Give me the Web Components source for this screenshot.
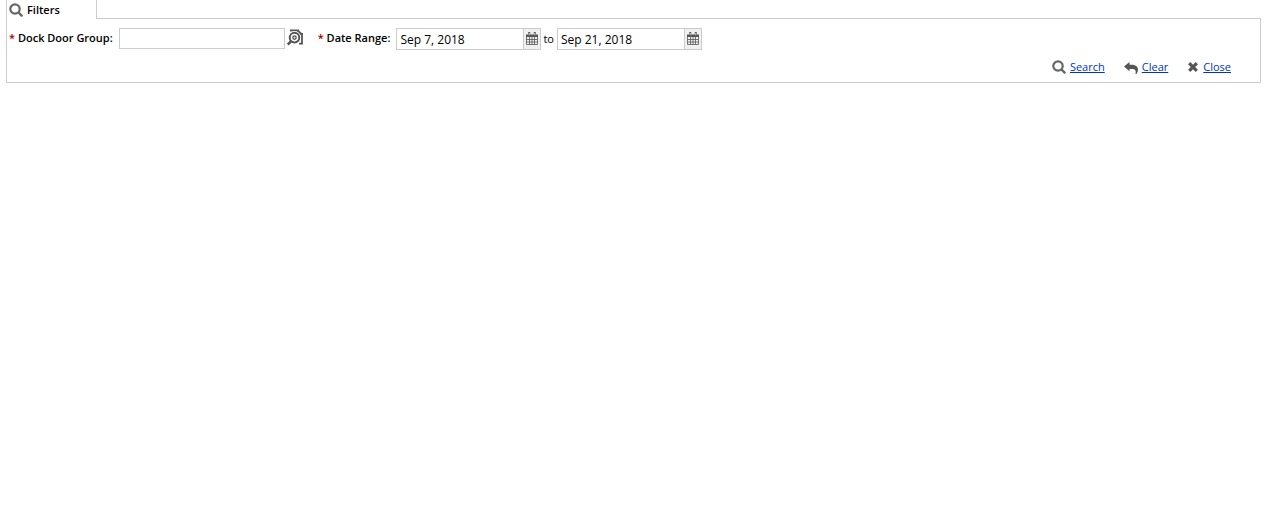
<!DOCTYPE html>
<html lang="en">
<head>
<meta charset="utf-8">
<title>Filters</title>
<style>
body { margin: 0; background: #fff; color: #000; font: 11px/16px "Open Sans", sans-serif; }
</style>
</head>
<body>
<filter-panel heading="Filters">
  <lookup-field label="Dock Door Group:"></lookup-field>
  <date-range label="Date Range:" from="Sep 7, 2018" to="Sep 21, 2018"></date-range>
  <action-link slot="actions" icon="search">Search</action-link>
  <action-link slot="actions" icon="undo">Clear</action-link>
  <action-link slot="actions" icon="close">Close</action-link>
</filter-panel>
<script>
const ICONS = {
  search: [14, 14, '<circle cx="6" cy="6" r="4.7" fill="none" stroke="#666" stroke-width="2.2"/><path d="M9.5 9.5L12.6 12.6" stroke="#666" stroke-width="2.4" stroke-linecap="round"/>'],
  lookup: [16, 17, '<path d="M3 1.5H11V5H15V14.7H12" fill="none" stroke="currentColor" stroke-width="1.8"/><path d="M11 .6L15.9 5V6H11Z" fill="currentColor"/><circle cx="7.5" cy="8.6" r="6.6" fill="#fff"/><circle cx="7.5" cy="8.6" r="4.8" fill="none" stroke="currentColor" stroke-width="2"/><circle cx="7.5" cy="8.6" r="2.3" fill="currentColor"/><path d="M6.2 8.6H8.8M7.5 7.3V9.9" stroke="#fff" stroke-width=".6"/><path d="M4 12.4L.8 15.6" stroke="currentColor" stroke-width="2.6"/>'],
  undo: [14, 14, '<path d="M0 6.5L5.5 2V4.7H8C12 4.7 14 7 14 9.8C14 11.4 13.3 13 12.4 14H11.4C12.4 11 11.4 9 8 9H5.5V11.3Z" fill="currentColor"/>'],
  close: [12, 12, '<path d="M2.2 2.2L9.8 9.8M9.8 2.2L2.2 9.8" stroke="currentColor" stroke-width="3.1"/>'],
  calendar: [12, 14, '<path d="M.5 3.5H11.5V12.5H.5ZM.5 7.5H11.5M.5 10H11.5M3.5 5V12.5M6 5V12.5M8.5 5V12.5" fill="none" stroke="currentColor" stroke-width=".8"/><path d="M0 2.5H12V5H0Z" fill="currentColor"/><path d="M3.2 1V3.2M8.8 1V3.2" stroke="currentColor" stroke-width="2.2" stroke-linecap="round"/><path d="M3.2 1V3.2M8.8 1V3.2" stroke="#fff" stroke-width=".8"/>']
};

class UiIcon extends HTMLElement {
  connectedCallback() {
    const [w, h, shape] = ICONS[this.getAttribute('name')];
    this.attachShadow({ mode: 'open' }).innerHTML = `
      <style>
        :host { display: inline-flex; flex: none; color: #555; }
        svg { display: block; }
      </style>
      <svg width="${w}" height="${h}" viewBox="0 0 ${w} ${h}" aria-hidden="true">${shape}</svg>`;
  }
}

class FilterPanel extends HTMLElement {
  connectedCallback() {
    this.attachShadow({ mode: 'open' }).innerHTML = `
      <style>
        :host { display: block; margin: 0 17px 0 6px; }
        header { display: flex; height: 19px; }
        h2 { display: flex; align-items: center; gap: 4px; box-sizing: border-box; width: 91px; margin: 0;
             padding: 1px 2px 0; border: solid #ccc; border-width: 0 1px; font: inherit; font-weight: 600; }
        .rule { flex: 1; border-bottom: 1px solid #ccc; }
        section { border: solid #ccc; border-width: 0 1px 1px; padding: 9px 2px 7px; }
        .fields { display: flex; flex-wrap: wrap; align-items: flex-start; gap: 15px; }
        .actions { display: flex; justify-content: flex-end; gap: 19px; padding: 9px 27px 0 0; }
      </style>
      <header><h2><ui-icon name="search"></ui-icon>${this.getAttribute('heading')}</h2><div class="rule"></div></header>
      <section>
        <div class="fields"><slot></slot></div>
        <div class="actions"><slot name="actions"></slot></div>
      </section>`;
  }
}

const FIELD_STYLE = `
  :host { display: flex; align-items: flex-start; }
  label { padding-top: 2px; }
  .name { font-weight: 600; margin-right: 6px; }
  .star { color: #a00000; }
  button { display: flex; align-items: center; justify-content: center; margin: 0; padding: 0; border: 0; background: none; }`;

class LookupField extends HTMLElement {
  connectedCallback() {
    this.attachShadow({ mode: 'open' }).innerHTML = `
      <style>${FIELD_STYLE}
        input { box-sizing: border-box; width: 166px; height: 21px; margin: 0; padding: 0 3px;
                border: 1px solid #ccc; border-radius: 0; font: 12px/16px "Open Sans", sans-serif; }
        button { width: 16px; height: 19px; margin-left: 2px; }
      </style>
      <label class="name" for="value"><span class="star">*</span> ${this.getAttribute('label')}</label>
      <input id="value" type="text" required>
      <button type="button" aria-label="Look up"><ui-icon name="lookup"></ui-icon></button>`;
  }
}

class DateRange extends HTMLElement {
  connectedCallback() {
    this.attachShadow({ mode: 'open' }).innerHTML = `
      <style>${FIELD_STYLE}
        .date { display: flex; box-sizing: border-box; width: 145px; height: 22px; border: 1px solid #ccc; }
        input { flex: 1; min-width: 0; margin: 0; padding: 2px 3px 0; border: 0; border-radius: 0;
                color: #000; background: #fff; font: 12px/18px "Open Sans", sans-serif; }
        button { width: 17px; border-left: 1px solid #ccc; background: #f0f0f0; }
        .to { margin: 1px 3px 0 2px; }
      </style>
      <label class="name" for="from"><span class="star">*</span> ${this.getAttribute('label')}</label>
      <div class="date"><input id="from" type="text" value="${this.getAttribute('from')}"><button type="button" aria-label="Choose start date"><ui-icon name="calendar"></ui-icon></button></div>
      <label class="to" for="to">to</label>
      <div class="date"><input id="to" type="text" value="${this.getAttribute('to')}"><button type="button" aria-label="Choose end date"><ui-icon name="calendar"></ui-icon></button></div>`;
  }
}

class ActionLink extends HTMLElement {
  connectedCallback() {
    this.attachShadow({ mode: 'open' }).innerHTML = `
      <style>
        :host { display: flex; align-items: center; gap: 4px; }
        a { color: #03c; text-decoration: underline; }
      </style>
      <ui-icon name="${this.getAttribute('icon')}"></ui-icon><a href="#"><slot></slot></a>`;
  }
}

customElements.define('ui-icon', UiIcon);
customElements.define('lookup-field', LookupField);
customElements.define('date-range', DateRange);
customElements.define('action-link', ActionLink);
customElements.define('filter-panel', FilterPanel);
</script>
</body>
</html>
